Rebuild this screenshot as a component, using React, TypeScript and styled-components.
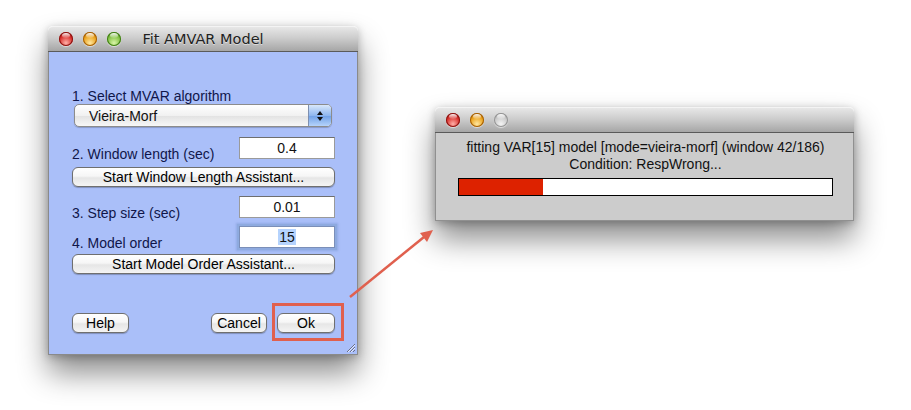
import React from "react";
import styled, { createGlobalStyle, css } from "styled-components";

const Global = createGlobalStyle`
  html, body { margin: 0; padding: 0; background: #ffffff; }
  body { font-family: "Liberation Sans", Arial, sans-serif; }
`;

const Desktop = styled.div`
  position: relative;
  width: 911px;
  height: 410px;
  overflow: hidden;
  background: #ffffff;
`;

const Window = styled.div<{ $x: number; $y: number; $w: number; $h: number }>`
  position: absolute;
  left: ${(p) => p.$x}px;
  top: ${(p) => p.$y}px;
  width: ${(p) => p.$w}px;
  height: ${(p) => p.$h}px;
  display: flex;
  flex-direction: column;
  border-radius: 5px 5px 0 0;
  box-shadow: 0 18px 30px rgba(0, 0, 0, 0.45), 0 2px 8px rgba(0, 0, 0, 0.25);
`;

const TitleBar = styled.div`
  height: 24px;
  flex: none;
  display: flex;
  align-items: center;
  position: relative;
  padding-left: 11px;
  gap: 10px;
  border-radius: 5px 5px 0 0;
  background: linear-gradient(#e7e7e7, #cdcdcd 45%, #a6a6a6);
  border-bottom: 1px solid #5a5a5a;
  border-top: 1px solid #f4f4f4;
`;

const Title = styled.div`
  position: absolute;
  left: 0;
  right: 0;
  top: 0;
  bottom: 0;
  display: flex;
  align-items: center;
  justify-content: center;
  font-family: "DejaVu Sans", "Liberation Sans", sans-serif;
  font-size: 14.5px;
  color: #222;
  text-shadow: 0 1px 0 rgba(255, 255, 255, 0.5);
  pointer-events: none;
`;

const lightColors: Record<string, [string, string, string]> = {
  red: ["#ffb0a8", "#d8302c", "#8a1310"],
  orange: ["#ffe7a0", "#eaa21c", "#a45e06"],
  green: ["#d9f5a8", "#82c143", "#3f7d14"],
  gray: ["#f4f4f4", "#c9c9c9", "#949494"],
};

const Light = styled.div<{ $c: string }>`
  position: relative;
  width: 14px;
  height: 14px;
  border-radius: 50%;
  flex: none;
  ${(p) => {
    const [hi, mid, dark] = lightColors[p.$c];
    return css`
      background: radial-gradient(circle at 50% 78%, ${hi} 0%, ${mid} 55%, ${dark} 100%);
      box-shadow: inset 0 0 0 1px ${dark}, 0 1px 1px rgba(255, 255, 255, 0.6);
    `;
  }}
  &::after {
    content: "";
    position: absolute;
    left: 3px;
    top: 1px;
    width: 8px;
    height: 5px;
    border-radius: 50%;
    background: linear-gradient(rgba(255, 255, 255, 0.95), rgba(255, 255, 255, 0.1));
  }
`;

const BlueBody = styled.div`
  flex: 1;
  position: relative;
  display: flex;
  flex-direction: column;
  padding: 0 22px 0 23px;
  background: #aabff9;
  border: 1px solid #8a8a8a;
  border-top: none;
  font-size: 14px;
  color: #10164a;
`;

const Label = styled.div<{ $mt?: number; $mb?: number }>`
  line-height: 16px;
  margin-top: ${(p) => p.$mt ?? 0}px;
  margin-bottom: ${(p) => p.$mb ?? 0}px;
  white-space: nowrap;
`;

const Select = styled.div`
  height: 21px;
  margin: 0 3px 0 2px;
  display: flex;
  align-items: stretch;
  border: 1px solid #8c8c8c;
  border-radius: 5px;
  overflow: hidden;
  background: linear-gradient(#ffffff, #f1f1f1 50%, #e2e2e2 51%, #f7f7f7);
  box-shadow: 0 1px 1px rgba(0, 0, 0, 0.2);
  color: #111;
`;

const SelectText = styled.div`
  flex: 1;
  padding-left: 14px;
  display: flex;
  align-items: center;
  font-size: 14px;
`;

const Stepper = styled.div`
  width: 22px;
  border-left: 1px solid #7d8fb0;
  background: linear-gradient(#d8e7fb, #8fb7ee 50%, #6fa0e6 51%, #b5d3fb);
  display: flex;
  flex-direction: column;
  align-items: center;
  justify-content: center;
  gap: 2px;
`;

const Tri = styled.div<{ $up?: boolean }>`
  width: 0;
  height: 0;
  border-left: 3px solid transparent;
  border-right: 3px solid transparent;
  ${(p) =>
    p.$up
      ? css`border-bottom: 4px solid #111;`
      : css`border-top: 4px solid #111;`}
`;

const FieldRow = styled.div<{ $mt: number }>`
  display: flex;
  align-items: flex-end;
  justify-content: space-between;
  margin-top: ${(p) => p.$mt}px;
`;

const Field = styled.div<{ $focus?: boolean }>`
  width: 94px;
  height: 20px;
  border: 1px solid #9a9a9a;
  border-top-color: #6e6e6e;
  background: #ffffff;
  display: flex;
  align-items: center;
  justify-content: center;
  font-size: 14px;
  color: #111;
  ${(p) =>
    p.$focus &&
    css`
      border-color: #7b8fb8;
      box-shadow: 0 0 0 2px #8eaadf, 0 0 2px 3px rgba(120, 150, 210, 0.5);
    `}
`;

const Selected = styled.span`
  background: #b5d3fd;
  padding: 0 1px;
`;

const PushButton = styled.div<{ $mt?: number; $w?: number }>`
  height: 18px;
  margin-top: ${(p) => p.$mt ?? 0}px;
  ${(p) => (p.$w ? `width: ${p.$w - 2}px;` : "")}
  border: 1px solid #6f6f6f;
  border-radius: 6px;
  background: linear-gradient(#ffffff, #f6f6f6 45%, #e6e6e6 55%, #f4f4f4);
  box-shadow: 0 1px 1px rgba(0, 0, 0, 0.25);
  display: flex;
  align-items: center;
  justify-content: center;
  font-size: 14px;
  color: #000;
  white-space: nowrap;
`;

const Footer = styled.div`
  display: flex;
  align-items: center;
  margin-top: 39px;
  gap: 10px;
`;

const Spacer = styled.div`
  flex: 1;
`;

const Grip = styled.svg`
  position: absolute;
  right: 1px;
  bottom: 1px;
`;

const GrayBody = styled.div`
  flex: 1;
  display: flex;
  flex-direction: column;
  align-items: center;
  padding: 6px 20px 0 22px;
  background: #cccccc;
  border: 1px solid #909090;
  border-top: none;
  font-size: 14px;
  color: #111;
`;

const StatusLine = styled.div`
  line-height: 17px;
  white-space: nowrap;
`;

const Progress = styled.div`
  align-self: stretch;
  height: 16px;
  margin-top: 5px;
  border: 1px solid #000;
  background: #ffffff;
  display: flex;
`;

const ProgressFill = styled.div`
  background: #dd2200;
`;

const Highlight = styled.div`
  position: absolute;
  left: 272px;
  top: 303px;
  width: 66px;
  height: 32px;
  border: 3px solid #e0604e;
  pointer-events: none;
`;

const ArrowSvg = styled.svg`
  position: absolute;
  left: 0;
  top: 0;
  pointer-events: none;
`;

export default function App() {
  const progress = 42 / 186;
  return (
    <Desktop>
      <Global />
      <Window $x={48} $y={26} $w={310} $h={329}>
        <TitleBar>
          <Light $c="red" />
          <Light $c="orange" />
          <Light $c="green" />
          <Title>Fit AMVAR Model</Title>
        </TitleBar>
        <BlueBody>
          <Label $mt={36}>1. Select MVAR algorithm</Label>
          <Select>
            <SelectText>Vieira-Morf</SelectText>
            <Stepper>
              <Tri $up />
              <Tri />
            </Stepper>
          </Select>
          <FieldRow $mt={10}>
            <Label $mb={-3}>2. Window length (sec)</Label>
            <Field>0.4</Field>
          </FieldRow>
          <PushButton $mt={8}>Start Window Length Assistant...</PushButton>
          <FieldRow $mt={9}>
            <Label $mb={-3}>3. Step size (sec)</Label>
            <Field>0.01</Field>
          </FieldRow>
          <FieldRow $mt={8}>
            <Label $mb={-3}>4. Model order</Label>
            <Field $focus>
              <Selected>15</Selected>
            </Field>
          </FieldRow>
          <PushButton $mt={6}>Start Model Order Assistant...</PushButton>
          <Footer>
            <PushButton $w={57}>Help</PushButton>
            <Spacer />
            <PushButton $w={56}>Cancel</PushButton>
            <PushButton $w={58}>Ok</PushButton>
          </Footer>
          <Grip width="12" height="12" viewBox="0 0 12 12">
            <path d="M11 3 L3 11 M11 6 L6 11 M11 9 L9 11" stroke="#6a6f88" strokeWidth="1" />
            <path d="M11 4 L4 11 M11 7 L7 11" stroke="#e6ecff" strokeWidth="1" />
          </Grip>
        </BlueBody>
      </Window>

      <Window $x={435} $y={107} $w={419} $h={114}>
        <TitleBar>
          <Light $c="red" />
          <Light $c="orange" />
          <Light $c="gray" />
        </TitleBar>
        <GrayBody>
          <StatusLine>fitting VAR[15] model [mode=vieira-morf] (window 42/186)</StatusLine>
          <StatusLine>Condition: RespWrong...</StatusLine>
          <Progress>
            <ProgressFill style={{ width: `${progress * 100}%` }} />
          </Progress>
        </GrayBody>
      </Window>

      <Highlight />
      <ArrowSvg width="911" height="410" viewBox="0 0 911 410">
        <line x1="350" y1="297" x2="424" y2="237" stroke="#e0604e" strokeWidth="2.5" />
        <polygon points="433,230 420,233 427,242" fill="#e0604e" />
      </ArrowSvg>
    </Desktop>
  );
}
